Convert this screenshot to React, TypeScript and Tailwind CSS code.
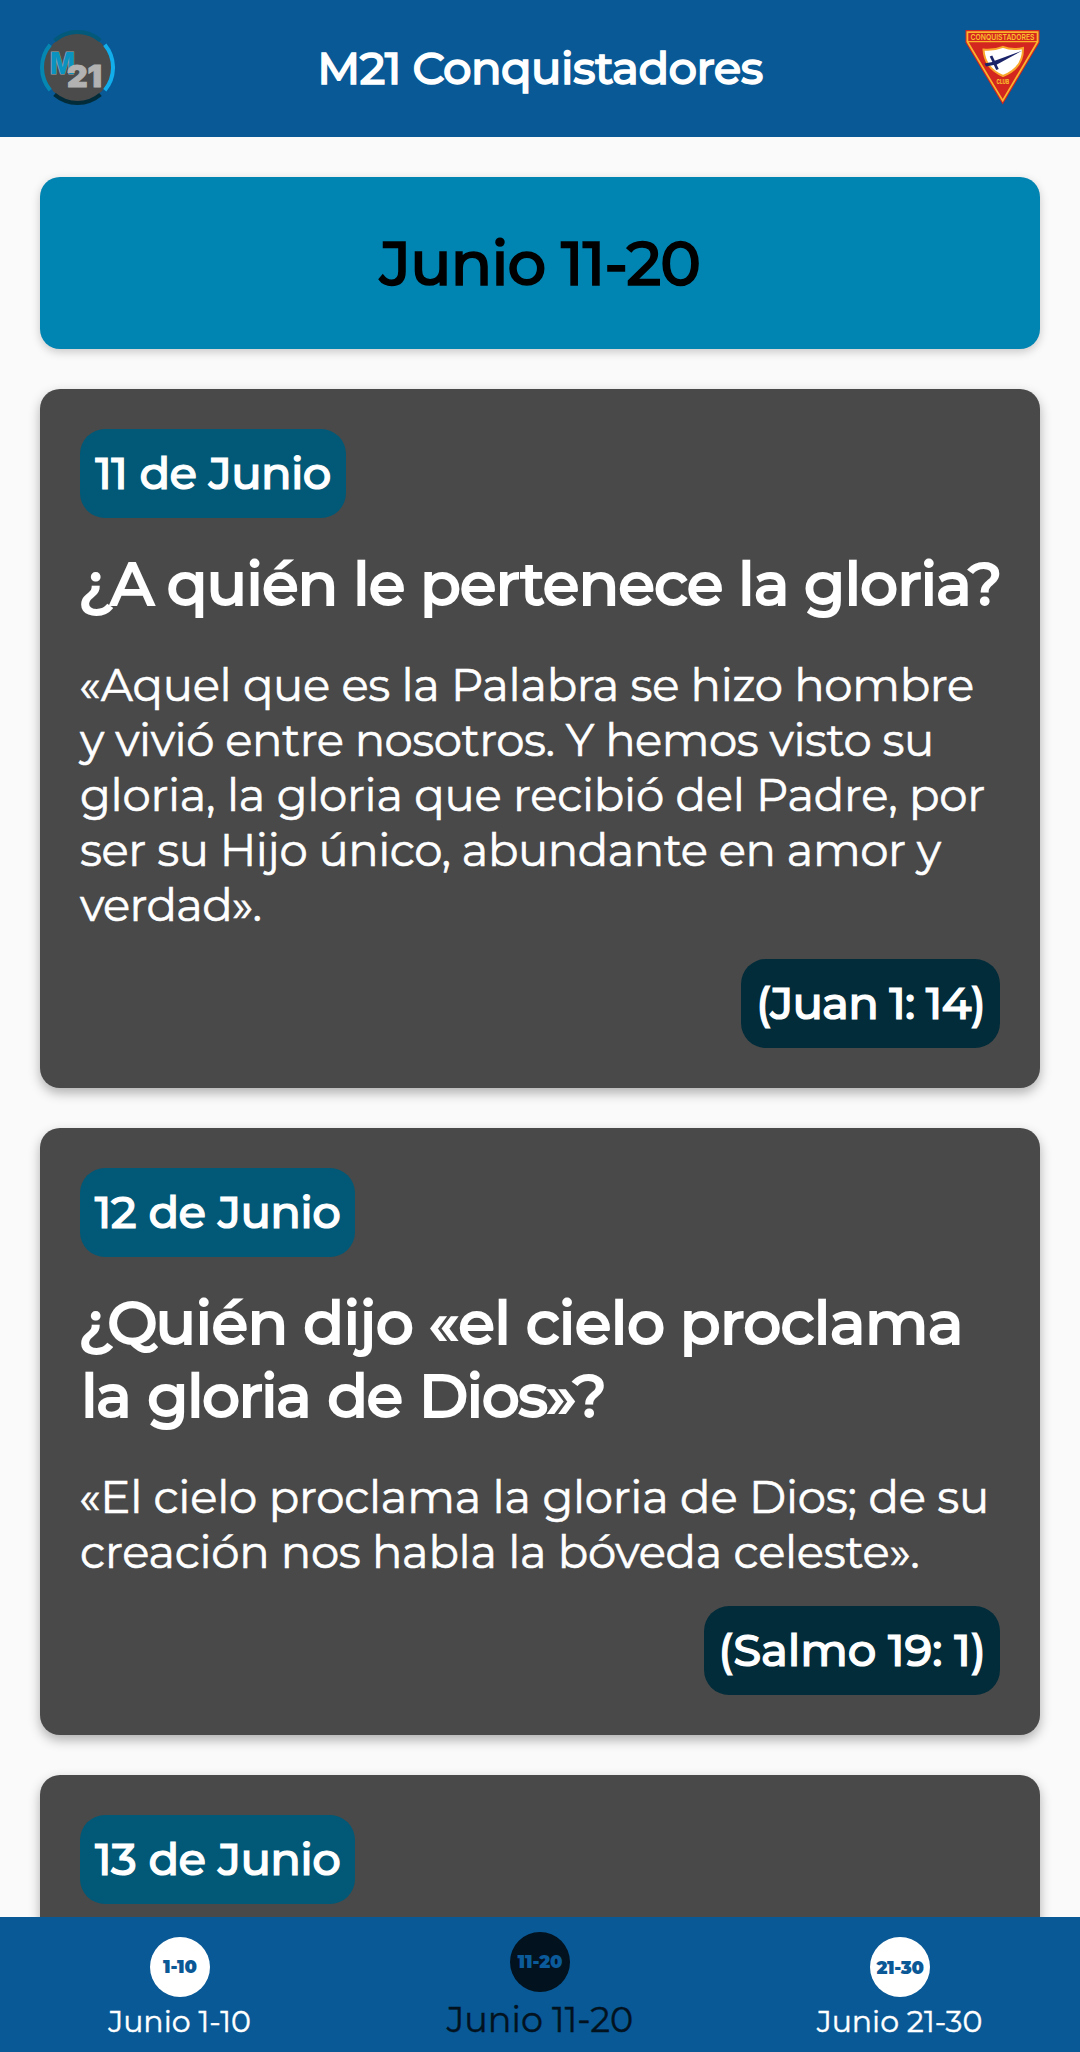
type Line = { text: string; className: string };

type Verse = {
  date: Line;
  question: Line[];
  body: Line[];
  reference: Line;
};

const verses: Verse[] = [
  {
    date: { text: "11 de Junio", className: "w-[266px] tracking-[-0.7px] [word-spacing:1px]" },
    question: [{ text: "¿A quién le pertenece la gloria?", className: "-ml-0.5 tracking-[-1.02px] [word-spacing:0.4px] first-letter:tracking-[-3px]" }],
    body: [
      { text: "«Aquel que es la Palabra se hizo hombre", className: "-ml-px tracking-[-0.3px]" },
      { text: "y vivió entre nosotros. Y hemos visto su", className: "tracking-[-0.49px]" },
      { text: "gloria, la gloria que recibió del Padre, por", className: "tracking-[-0.24px]" },
      { text: "ser su Hijo único, abundante en amor y", className: "tracking-[-0.46px]" },
      { text: "verdad».", className: "tracking-[-0.66px]" },
    ],
    reference: { text: "(Juan 1: 14)", className: "w-[259px] tracking-[-0.85px]" },
  },
  {
    date: { text: "12 de Junio", className: "w-[275px] tracking-[-0.63px] [word-spacing:1px]" },
    question: [
      { text: "¿Quién dijo «el cielo proclama", className: "-ml-0.5 tracking-[-0.7px] first-letter:tracking-[-2px]" },
      { text: "la gloria de Dios»?", className: "ml-px tracking-[-1.7px] [word-spacing:2.7px]" },
    ],
    body: [
      { text: "«El cielo proclama la gloria de Dios; de su", className: "-ml-px tracking-[-0.22px]" },
      { text: "creación nos habla la bóveda celeste».", className: "tracking-[-0.29px]" },
    ],
    reference: { text: "(Salmo 19: 1)", className: "w-[296px] tracking-[-0.15px]" },
  },
  {
    date: { text: "13 de Junio", className: "w-[275px] tracking-[-0.63px] [word-spacing:1px]" },
    question: [],
    body: [],
    reference: { text: "", className: "" },
  },
];

function M21Logo() {
  return (
    <svg className="mb-0.5 size-[75px]" viewBox="0 0 75 75" aria-label="M21">
      <circle cx="37.5" cy="37.5" r="34" fill="#4b4b4b" />
      <g fill="none" strokeWidth="4">
        <path d="M14.5 10.5A35.5 35.5 0 0 1 60.5 10.5" stroke="#03597a" />
        <path d="M64.8 14.8A35.5 35.5 0 0 1 64.8 60.2" stroke="#12aeec" />
        <path d="M60.5 64.5A35.5 35.5 0 0 1 14.5 64.5" stroke="#022c3a" />
        <path d="M10.2 60.2A35.5 35.5 0 0 1 10.2 14.8" stroke="#0587b2" />
      </g>
      <g fontFamily="Inter, sans-serif" paintOrder="stroke">
        <text x="10" y="43.5" fontSize="30" fontWeight="800" textLength="25" lengthAdjust="spacingAndGlyphs" fill="#0a93c0" stroke="#9aa3a8" strokeWidth="1.2">M</text>
        <text x="27" y="56.5" fontSize="30" fontWeight="900" textLength="35" lengthAdjust="spacingAndGlyphs" fill="#b2b2b2" stroke="#b2b2b2" strokeWidth="1">21</text>
      </g>
    </svg>
  );
}

function ClubBadge() {
  return (
    <svg className="mb-0.5 size-[75px] overflow-visible" viewBox="0 0 75 75" aria-label="Conquistadores Club">
      <path d="M0.5 0H74.5V12.5L37.7 74.5L0.5 12.5Z" fill="#d3261f" />
      <path d="M2.4 2.2H72.6V11.8L37.7 70.6L2.4 11.8Z" fill="none" stroke="#fbb32c" strokeWidth="1.8" />
      <path d="M3 11.6H72" stroke="#fbb32c" strokeWidth="1.3" />
      <text x="5.5" y="10" fontSize="8" fontWeight="600" fontFamily="Inter, sans-serif" textLength="64" lengthAdjust="spacingAndGlyphs" fill="#fbc02d">CONQUISTADORES</text>
      <path d="M18.5 19.5Q29 20.5 38 16.8Q47 20.5 58 18Q58.5 38 38 46Q19.5 38 18.5 19.5Z" fill="#fff" stroke="#f9a72b" strokeWidth="2" />
      <path d="M57.5 20.5L31 35L29 31Z" fill="#1b2468" />
      <path d="M19.5 33.5L30 31.5L31 34.5L21 36.5Z" fill="#1b2468" />
      <path d="M26 26L32.5 39.5" stroke="#1b2468" strokeWidth="2.8" />
      <text x="31.5" y="53.5" fontSize="6" fontWeight="800" fontFamily="Inter, sans-serif" textLength="12.5" lengthAdjust="spacingAndGlyphs" fill="#fbc02d">CLUB</text>
    </svg>
  );
}

function Pill({ line, color }: { line: Line; color: string }) {
  return (
    <div className={`flex h-[89px] items-center justify-center rounded-[25px] pb-0.5 text-[45px] font-medium whitespace-nowrap [-webkit-text-stroke:1.2px_currentColor] ${color} ${line.className}`}>
      {line.text}
    </div>
  );
}

function VerseCard({ verse }: { verse: Verse }) {
  return (
    <article className="shrink-0 rounded-[20px] bg-[#494949] p-10 text-white shadow-[0_5px_12px_rgba(0,0,0,0.3)]">
      <div className="flex">
        <Pill line={verse.date} color="bg-[#015977]" />
      </div>
      <h2 className="mt-[29px] text-[60px] leading-[73px] font-medium whitespace-nowrap [-webkit-text-stroke:1.9px_currentColor]">
        {verse.question.map((l) => (
          <span key={l.text} className={`block ${l.className}`}>{l.text}</span>
        ))}
      </h2>
      <p className="mt-[37px] text-[45px] leading-[55px] whitespace-nowrap [-webkit-text-stroke:0.6px_currentColor]">
        {verse.body.map((l) => (
          <span key={l.text} className={`block ${l.className}`}>{l.text}</span>
        ))}
      </p>
      <div className="mt-[27px] flex justify-end">
        <Pill line={verse.reference} color="bg-[#022c3a]" />
      </div>
    </article>
  );
}

function Tab({ range, rangeClass, active = false }: { range: string; rangeClass: string; active?: boolean }) {
  return (
    <button className={`flex flex-1 flex-col items-center ${active ? "pt-[15px] text-[#03121f]" : "pt-5 text-white"}`}>
      <span className={`flex size-[60px] items-center justify-center rounded-full text-[18px] font-black ${active ? "bg-[#03121f] text-[#0b5b9a]" : "bg-white text-[#0a5896]"} ${rangeClass}`}>
        {range}
      </span>
      <span className={`whitespace-nowrap [-webkit-text-stroke:0.4px_currentColor] ${active ? "mt-2 text-[35px] leading-10" : "mt-[7px] -ml-px text-[30px] leading-9"}`}>
        Junio {range}
      </span>
    </button>
  );
}

export default function App() {
  return (
    <div className="flex h-[2052px] w-[1080px] flex-col overflow-hidden bg-[#fafafa] font-['Montserrat','Inter',sans-serif]">
      <header className="flex h-[137px] shrink-0 items-center justify-between bg-[#085996] px-10">
        <M21Logo />
        <h1 className="pb-0.5 text-[45px] font-medium tracking-[-0.58px] whitespace-nowrap text-white [-webkit-text-stroke:1.4px_currentColor]">M21 Conquistadores</h1>
        <ClubBadge />
      </header>
      <main className="flex min-h-0 flex-1 flex-col gap-10 overflow-hidden px-10 pt-10">
        <div className="flex h-[172px] shrink-0 items-center justify-center rounded-[20px] bg-[#0085b3] pt-px text-[61px] font-medium tracking-[-0.85px] text-black shadow-[0_3px_10px_rgba(0,0,0,0.2)] [-webkit-text-stroke:1.6px_currentColor]">
          Junio 11-20
        </div>
        {verses.map((v) => (
          <VerseCard key={v.date.text} verse={v} />
        ))}
      </main>
      <nav className="flex h-[135px] shrink-0 bg-[#085996]">
        <Tab range="1-10" rangeClass="" />
        <Tab range="11-20" rangeClass="" active />
        <Tab range="21-30" rangeClass="pt-[3px] tracking-[-0.29px]" />
      </nav>
    </div>
  );
}
